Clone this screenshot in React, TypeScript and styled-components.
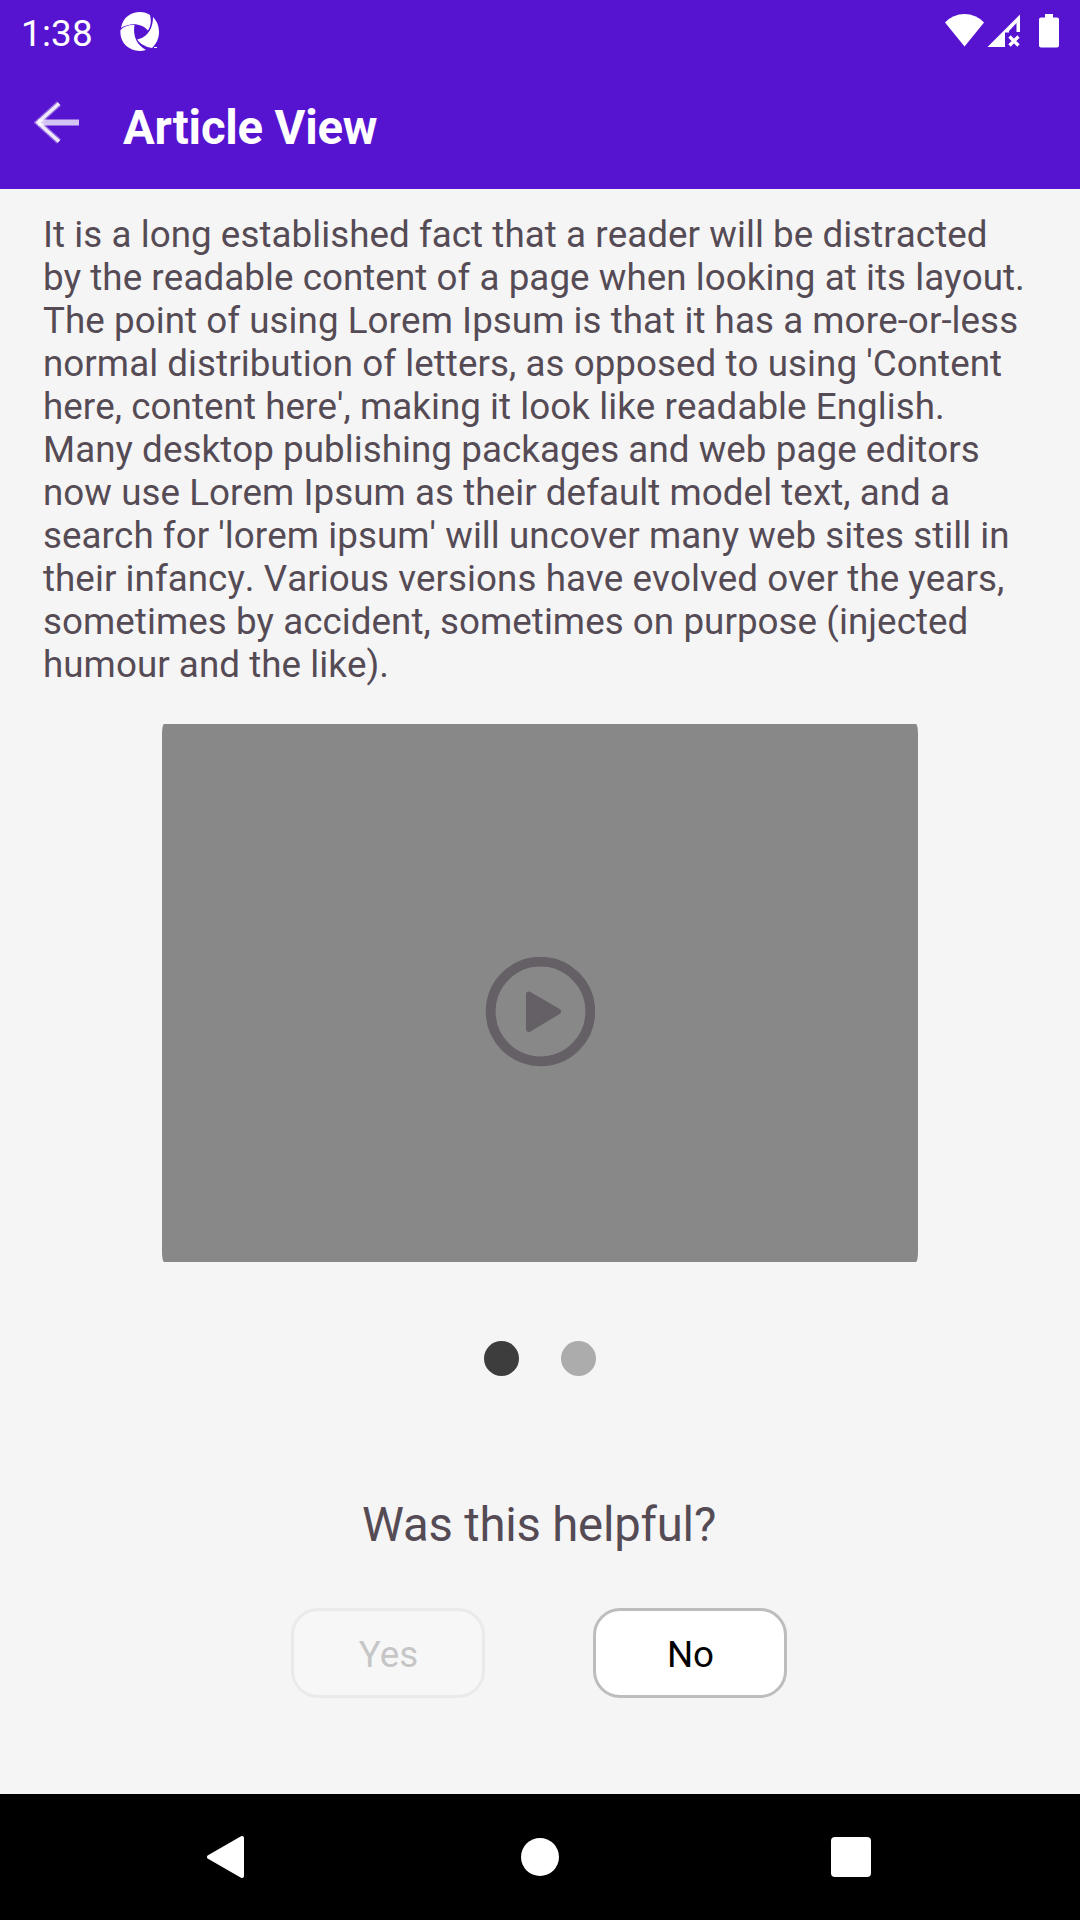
import React from "react";
import styled, { createGlobalStyle } from "styled-components";

const GlobalStyle = createGlobalStyle`
  * { box-sizing: border-box; }
  body { margin: 0; background: #f5f5f5; }
`;

const Screen = styled.div`
  width: 1080px;
  height: 1920px;
  display: flex;
  flex-direction: column;
  overflow: hidden;
  background: #f5f5f5;
  color: #554b55;
  font-family: Roboto, "Liberation Sans", sans-serif;
  font-size: 36.75px;
`;

const StatusBar = styled.header`
  height: 63px;
  flex: none;
  display: flex;
  align-items: flex-start;
  padding: 0 20px 0 21px;
  background: #5614d0;
  color: #fff;
`;

const Clock = styled.span`
  width: 99px;
  padding-top: 12px;
  font-size: 36.75px;
  line-height: 43px;
  letter-spacing: 0.25px;
`;

const StatusIcons = styled.div`
  margin-left: auto;
  display: flex;
`;

const AppBar = styled.div`
  height: 126px;
  flex: none;
  display: flex;
  align-items: flex-start;
  padding: 36px 34px 0;
  background: #5614d0;
`;

const BackButton = styled.button`
  width: 89px;
  height: 48px;
  padding: 0;
  border: 0;
  background: none;
  text-align: left;
`;

const Title = styled.h1`
  margin: 1px 0 0;
  font-size: 47.25px;
  line-height: 56px;
  font-weight: 700;
  letter-spacing: -0.2px;
  color: #fff;
`;

const Content = styled.main`
  flex: 1;
  display: flex;
  flex-direction: column;
  align-items: center;
`;

const ArticleText = styled.p`
  align-self: stretch;
  margin: 24px 0 38px;
  padding-left: 43px;
  line-height: 43px;
  font-kerning: none;
  letter-spacing: 0.05px;
  white-space: pre-line;
`;

const VideoCard = styled.div`
  width: 756px;
  height: 538px;
  flex: none;
  display: flex;
  align-items: center;
  justify-content: center;
  padding-top: 37px;
  border-radius: 2px / 10px;
  background: #888;
`;

const Pager = styled.div`
  display: flex;
  gap: 42px;
  margin-top: 79px;
`;

const Dot = styled.span<{ $active?: boolean }>`
  width: 35px;
  height: 35px;
  border-radius: 50%;
  background: ${(p) => (p.$active ? "#3d3d3d" : "#acacac")};
`;

const Question = styled.h2`
  margin: 121px 2px 0 0;
  font-size: 47.25px;
  line-height: 56px;
  font-weight: 400;
  letter-spacing: -0.2px;
`;

const Answers = styled.div`
  display: flex;
  gap: 108px;
  margin: 55px 2px 0 0;
`;

const AnswerButton = styled.button`
  width: 194px;
  height: 90px;
  padding: 2px 0 0 1px;
  border: 3px solid #bdbdbd;
  border-radius: 27px;
  background: #fff;
  color: #000;
  font: inherit;
  line-height: 43px;
  &:disabled {
    border-color: #eaeaea;
    background: #f7f7f7;
    color: #c6c6c6;
  }
`;

const NavBar = styled.nav`
  height: 126px;
  flex: none;
  display: flex;
  align-items: center;
  justify-content: space-between;
  padding: 0 209px 0 207px;
  background: #000;
`;

const Icon = styled.svg`
  display: block;
  flex: none;
`;

const HomeIcon = styled(Icon)`
  margin-left: 4px;
`;

const article = `It is a long established fact that a reader will be distracted
by the readable content of a page when looking at its layout.
The point of using Lorem Ipsum is that it has a more-or-less
normal distribution of letters, as opposed to using 'Content
here, content here', making it look like readable English.
Many desktop publishing packages and web page editors
now use Lorem Ipsum as their default model text, and a
search for 'lorem ipsum' will uncover many web sites still in
their infancy. Various versions have evolved over the years,
sometimes by accident, sometimes on purpose (injected
humour and the like).`;

export default function App() {
  return (
    <Screen>
      <GlobalStyle />
      <StatusBar>
        <Clock>1:38</Clock>
        <Icon width="40" height="63" viewBox="0 0 40 63" fill="#fff">
          <path d="M1 28C3 17 11 12 20 12C24 12 27 13 30 15C31.500 21 31 26 28 30.500C23 24 11 21.500 1 28Z" />
          <path d="M33 17C37 21 39 26 39 32C39 39 36 44 32 48C26 47 20 44 17 39.500C24 38.500 33 32 33 17Z" />
          <path d="M.5 30C4 26 9 24.700 14.500 25C13 34 15 44 26 50C12 54-1 44 .5 30Z" />
          <path d="M34 47h3v1h-3z" />
        </Icon>
        <StatusIcons>
          <Icon width="115" height="63" viewBox="945 0 115 63" fill="#fff">
            <path d="M945 22.500Q953 14 964.500 14T984 22.500L964.500 46.500Z" />
            <path d="M987.500 47L1020 14.500V32H1016.500V23L1009 31V32.500H1005V47Z" />
            <path d="M1009.500 36.500L1018.500 45.500M1018.500 36.500L1009.500 45.500" stroke="#fff" strokeWidth="3.300" />
            <path d="M1045 14h8v3.500h4q2 0 2 2v26q0 2-2 2h-16q-2 0-2-2v-26q0-2 2-2h4z" />
          </Icon>
        </StatusIcons>
      </StatusBar>
      <AppBar>
        <BackButton aria-label="Back">
          <Icon width="46" height="48" viewBox="0 0 46 48" fill="none" stroke="#fff">
            <path d="M4 23.500H45" strokeWidth="6" strokeOpacity=".75" />
            <path d="M25 4.500L4 23.500L25 42.500" strokeWidth="6" strokeOpacity=".35" />
            <path d="M25 4.500L4 23.500L25 42.500" strokeWidth="3.500" strokeOpacity=".85" />
          </Icon>
        </BackButton>
        <Title>Article View</Title>
      </AppBar>
      <Content>
        <ArticleText>{article}</ArticleText>
        <VideoCard>
          <Icon width="110" height="110" viewBox="0 0 110 110">
            <circle cx="55.500" cy="54.500" r="49.800" fill="none" stroke="#655f66" strokeWidth="9.800" />
            <path d="M44 37.500L73 54.500L44 72Z" fill="#655f66" stroke="#655f66" strokeWidth="6" strokeLinejoin="round" />
          </Icon>
        </VideoCard>
        <Pager>
          <Dot $active />
          <Dot />
        </Pager>
        <Question>Was this helpful?</Question>
        <Answers>
          <AnswerButton disabled>Yes</AnswerButton>
          <AnswerButton>No</AnswerButton>
        </Answers>
      </Content>
      <NavBar>
        <Icon width="38" height="44" viewBox="0 0 38 44">
          <path d="M35 3V41L2 22Z" fill="#fff" stroke="#fff" strokeWidth="4" strokeLinejoin="round" />
        </Icon>
        <HomeIcon width="38" height="38" viewBox="0 0 38 38">
          <circle cx="19" cy="19" r="19" fill="#fff" />
        </HomeIcon>
        <Icon width="40" height="40" viewBox="0 0 40 40">
          <rect width="40" height="40" rx="4" fill="#fff" />
        </Icon>
      </NavBar>
    </Screen>
  );
}
